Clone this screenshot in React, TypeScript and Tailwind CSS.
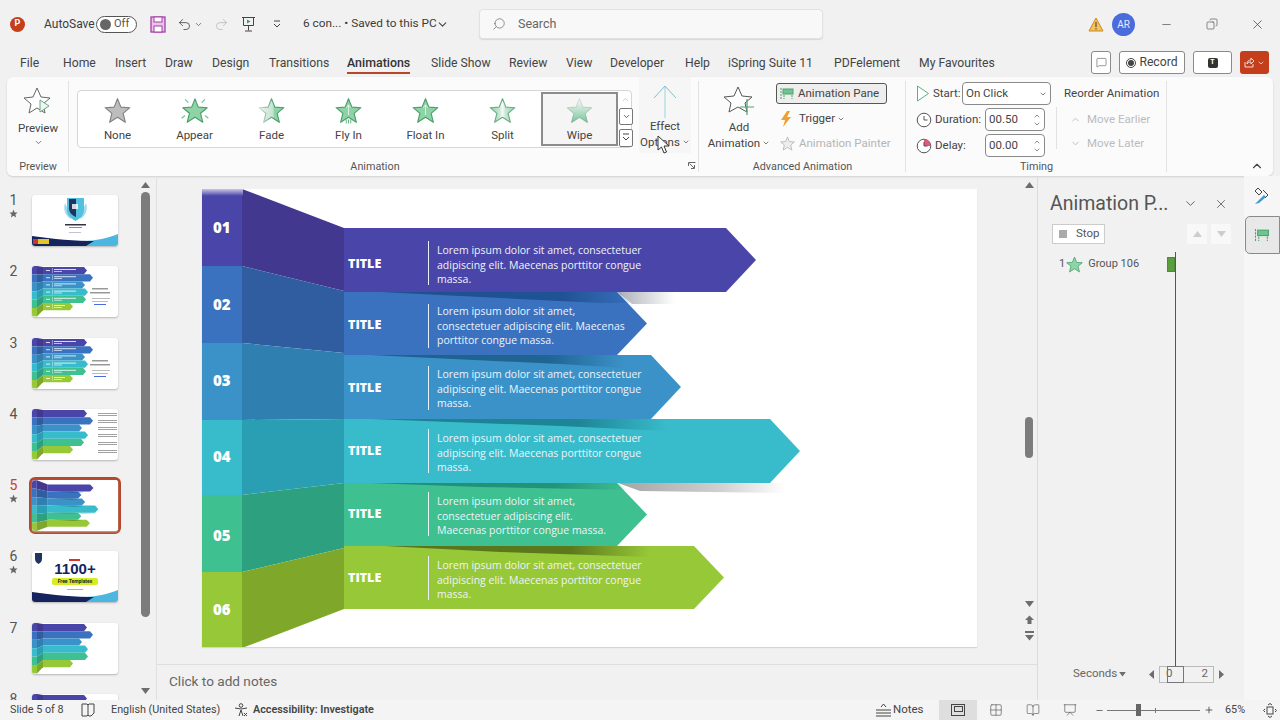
import React from "react";
import { ChevronDown, ChevronUp, Minus, Plus, Search, Undo2, X, MessageSquare, Copy, Grid2x2, BookOpen, Presentation } from "lucide-react";

const STAR = "12,1.500 15,9 23,9.500 17,14.500 19,22.500 12,18 5,22.500 7,14.500 1,9.500 9,9";

function Star({ fill = "#8ed3a6", stroke = "#4a9d6a", size = 27, children }: { fill?: string; stroke?: string; size?: number; children?: React.ReactNode }) {
  return (
    <svg width={size} height={size} viewBox="0 0 24 24" className="shrink-0">
      <polygon points={STAR} fill={fill} stroke={stroke} strokeWidth="1" strokeLinejoin="round" />
      {children}
    </svg>
  );
}

function GalleryStar({ kind }: { kind: string }) {
  if (kind === "None") return <Star fill="#bdbdbd" stroke="#808080" />;
  if (kind === "Appear")
    return (
      <svg width="30" height="27" viewBox="-1.500 0 27 24" className="shrink-0 -mx-[2px]">
        <polygon points={STAR} fill="#8ed3a6" stroke="#4a9d6a" strokeWidth="1" strokeLinejoin="round" />
        <path d="M3 2l3 3M21 2l-3 3M0 19l3-2.500M24 19l-3-2.500" stroke="#6fc48f" strokeWidth="1" />
      </svg>
    );
  if (kind === "Fade")
    return (
      <svg width="27" height="27" viewBox="0 0 24 24">
        <defs>
          <linearGradient id="gFade" x1="0" x2="1" y1="0" y2="0">
            <stop offset="0" stopColor="#eef2ef" />
            <stop offset="0.55" stopColor="#c6e4d2" />
            <stop offset="0.62" stopColor="#8ed3a6" />
          </linearGradient>
          <linearGradient id="gFadeS" x1="0" x2="1" y1="0" y2="0">
            <stop offset="0" stopColor="#d5dcd8" />
            <stop offset="0.6" stopColor="#4a9d6a" />
          </linearGradient>
        </defs>
        <polygon points={STAR} fill="url(#gFade)" stroke="url(#gFadeS)" strokeWidth="1" strokeLinejoin="round" />
      </svg>
    );
  if (kind === "Fly In")
    return (
      <Star>
        <path d="M12 7v9M10 9.500l2-2.500 2 2.500" stroke="#e6f5eb" strokeWidth="0.800" fill="none" />
        <path d="M10 20v3.500M12 20v3.500M14 20v3.500" stroke="#3f9a62" strokeWidth="0.700" />
      </Star>
    );
  if (kind === "Float In")
    return (
      <Star>
        <path d="M12 7v9M10 9.500l2-2.500 2 2.500" stroke="#e6f5eb" strokeWidth="0.800" fill="none" />
      </Star>
    );
  if (kind === "Split")
    return (
      <svg width="27" height="27" viewBox="0 0 24 24">
        <defs>
          <linearGradient id="gSplit" x1="0" x2="1" y1="0" y2="0">
            <stop offset="0" stopColor="#8ed3a6" />
            <stop offset="0.38" stopColor="#c8e8d4" />
            <stop offset="0.5" stopColor="#f6faf7" />
            <stop offset="0.62" stopColor="#c8e8d4" />
            <stop offset="1" stopColor="#8ed3a6" />
          </linearGradient>
        </defs>
        <polygon points={STAR} fill="url(#gSplit)" stroke="#6bab85" strokeWidth="1" strokeLinejoin="round" />
      </svg>
    );
  return (
    <svg width="27" height="27" viewBox="0 0 24 24">
      <defs>
        <linearGradient id="gWipe" x1="0" x2="0" y1="0" y2="1">
          <stop offset="0.1" stopColor="#f2f4f3" />
          <stop offset="0.95" stopColor="#7fcaa0" />
        </linearGradient>
        <linearGradient id="gWipeS" x1="0" x2="0" y1="0" y2="1">
          <stop offset="0.1" stopColor="#d8dcda" />
          <stop offset="0.95" stopColor="#7fb596" />
        </linearGradient>
      </defs>
      <polygon points={STAR} fill="url(#gWipe)" stroke="url(#gWipeS)" strokeWidth="0.900" strokeLinejoin="round" />
    </svg>
  );
}

const tabs = ["File", "Home", "Insert", "Draw", "Design", "Transitions", "Animations", "Slide Show", "Review", "View", "Developer", "Help", "iSpring Suite 11", "PDFelement", "My Favourites"];
const tabWidths = ["w-[43px]", "w-[52px]", "w-[50px]", "w-[47px]", "w-[57px]", "w-[78px]", "w-[84px]", "w-[78px]", "w-[57px]", "w-[44px]", "w-[75px]", "w-[43px]", "w-[106px]", "w-[85px]", "w-[80px]"];
const gallery = ["None", "Appear", "Fade", "Fly In", "Float In", "Split", "Wipe"];

function TitleBar() {
  return (
    <div className="h-[44px] pt-[4px] flex items-center text-[12px] text-[#3c3c3c]">
      <div className="ml-[10px] w-[15px] h-[15px] rounded-full bg-[#c43e1c] text-white text-[9px] font-bold flex items-center justify-center">P</div>
      <span className="ml-[19px] w-[52px]">AutoSave</span>
      <div className="w-[41px] h-[17px] rounded-full border border-[#555] flex items-center pl-[3px] gap-[3px] bg-white">
        <span className="w-[11px] h-[11px] rounded-full bg-[#666]" />
        <span className="text-[11px] text-[#555]">Off</span>
      </div>
      <svg width="16" height="17" viewBox="0 0 16 17" className="ml-[13px]">
        <rect x="1" y="1" width="14" height="15" fill="#e9c3ea" stroke="#a43fa8" strokeWidth="1.300" />
        <rect x="4" y="1" width="8" height="5" fill="#fff" stroke="#a43fa8" />
        <rect x="4" y="10" width="8" height="6" fill="#fff" stroke="#a43fa8" />
      </svg>
      <Undo2 size={15} strokeWidth={1.3} className="ml-[11px] text-[#444]" />
      <ChevronDown size={9} className="ml-[2px] text-[#555]" />
      <Undo2 size={15} strokeWidth={1} className="ml-[11px] text-[#aaa] -scale-x-100" />
      <svg width="15" height="17" viewBox="0 0 15 17" className="ml-[12px]">
        <path d="M1 1.500h13M2.500 1.500v8h10v-8M7.500 9.500v5M4 15h7" stroke="#444" fill="none" />
        <path d="M6 3.500l3.500 2-3.500 2z" fill="#3f9a62" />
      </svg>
      <svg width="8" height="9" viewBox="0 0 8 9" className="ml-[17px]">
        <path d="M1 1h6M1 4l3 3 3-3" stroke="#444" fill="none" />
      </svg>
      <span className="ml-[22px] w-[133px] whitespace-nowrap text-[11.800px]">6 con... • Saved to this PC</span>
      <ChevronDown size={13} className="text-[#444]" />
      <div className="ml-[30px] w-[344px] h-[30px] rounded-[4px] bg-[#f8f8f8] border border-[#e2e2e2] shadow-[0_1px_1px_#d8d8d8] flex items-center pl-[12px] gap-[12px] text-[#666] text-[12.500px]">
        <Search size={14} strokeWidth={1.2} className="-scale-x-100" />
        Search
      </div>
      <svg width="16" height="15" viewBox="0 0 16 15" className="ml-[265px]">
        <path d="M8 1L15 14H1z" fill="#f4c25b" stroke="#c98a20" />
        <path d="M8 5v5M8 11.200v1.300" stroke="#333" />
      </svg>
      <div className="ml-[8px] w-[23px] h-[23px] rounded-full bg-[#4a6cdc] text-[#e6ebff] text-[10px] flex items-center justify-center">AR</div>
      <Minus size={13} strokeWidth={1.2} className="ml-[25px] text-[#444]" />
      <Copy size={12} strokeWidth={1.2} className="ml-[33px] text-[#444] -scale-x-100" />
      <X size={15} strokeWidth={1.2} className="ml-[32px] text-[#444]" />
    </div>
  );
}

function TabBar() {
  return (
    <div className="h-[33px] flex items-start pl-[20px] text-[12.200px] text-[#444]">
      {tabs.map((t, i) => (
        <div key={t} className={`${tabWidths[i]} h-[27px] pt-[10px] whitespace-nowrap`}>
          <span className={t === "Animations" ? "inline-block h-[20px] border-b-2 border-[#b7472a] text-[#333] font-medium text-[12.400px]" : ""}>{t}</span>
        </div>
      ))}
      <div className="ml-[92px] mt-[7px] w-[20px] h-[23px] border border-[#8a8a8a] rounded-[3px] bg-white flex items-center justify-center shrink-0">
        <MessageSquare size={11} strokeWidth={1.2} />
      </div>
      <div className="ml-[8px] mt-[7px] w-[66px] h-[23px] border border-[#8a8a8a] rounded-[3px] bg-white flex items-center justify-center gap-[3px] shrink-0">
        <span className="w-[10px] h-[10px] rounded-full border border-[#444] flex items-center justify-center">
          <span className="w-[6px] h-[6px] rounded-full bg-[#444]" />
        </span>
        Record
      </div>
      <div className="ml-[8px] mt-[7px] w-[39px] h-[23px] border border-[#8a8a8a] rounded-[3px] bg-white flex items-center justify-center shrink-0">
        <span className="w-[10px] h-[10px] rounded-[2px] bg-[#333] text-white text-[7px] font-bold flex items-center justify-center">T</span>
      </div>
      <div className="ml-[8px] mt-[7px] w-[29px] h-[23px] rounded-[3px] bg-[#c43e1c] flex items-center justify-center gap-[2px] text-white shrink-0">
        <svg width="11" height="11" viewBox="0 0 11 11">
          <path d="M1 5v5h8V7M3 7c0-3 2-4 4-4V1l3 3-3 3V5C5 5 4 5.500 3 7z" fill="none" stroke="#fff" strokeWidth="0.800" />
        </svg>
        <ChevronDown size={8} />
      </div>
    </div>
  );
}

function Group({ width, label, labelClass = "", children }: { width: string; label: string; labelClass?: string; children: React.ReactNode }) {
  return (
    <div className={`${width} h-full flex flex-col relative after:absolute after:right-0 after:top-[4px] after:bottom-[4px] after:w-px after:bg-[#e2e2e2]`}>
      <div className="flex-1 min-h-0 flex">{children}</div>
      <div className={`h-[20px] text-[10.800px] text-[#555] flex items-center justify-center pt-[2px] ${labelClass}`}>{label}</div>
    </div>
  );
}

function Spinner({ value }: { value: string }) {
  return (
    <div className="w-[60px] h-[23px] border border-[#8a8a8a] rounded-[4px] bg-white flex items-center justify-between pl-[3px] pr-[3px] text-[11.500px]">
      {value}
      <div className="flex flex-col text-[#555]">
        <ChevronUp size={8} />
        <ChevronDown size={8} />
      </div>
    </div>
  );
}

function Clock({ delay }: { delay?: boolean }) {
  return (
    <svg width="16" height="16" viewBox="0 0 16 16" className="shrink-0">
      <circle cx="8" cy="8" r="6.800" fill="#fff" stroke="#555" />
      {delay && <path d="M8 8V1.200A6.800 6.800 0 0 1 14.800 8z" fill="#e8557a" />}
      <path d="M8 4v4h3.500" stroke="#555" fill="none" />
    </svg>
  );
}

function Ribbon() {
  return (
    <div className="mx-[7px] h-[99px] bg-[#fbfbfb] rounded-[6px] shadow-[0_1px_2px_#cfcfcf] flex text-[11.500px] text-[#444]">
      <Group width="w-[62px]" label="Preview">
        <div className="w-full flex flex-col items-center pt-[9px]">
          <svg width="30" height="30" viewBox="0 0 30 30">
            <polygon points="14,2 18,11 27,12 20,18 22,27 14,22 6,27 8,18 1,12 10,11" fill="#fff" stroke="#666" strokeLinejoin="round" />
            <path d="M17 14l9 6-9 6z" fill="#eef7f1" stroke="#6aa884" />
          </svg>
          <span className="mt-[5px] leading-[14px]">Preview</span>
          <ChevronDown size={9} className="mt-[3px] text-[#555]" />
        </div>
      </Group>
      <Group width="w-[630px]" label="Animation" labelClass="pr-[18px]">
        <div className="ml-[8px] mt-[13px] w-[555px] h-[58px] border border-[#d6d6d6] rounded-[4px] bg-white flex items-center">
          <div className="flex pl-[1px]">
            {gallery.map((g) => (
              <div key={g} className={`w-[77px] h-[54px] flex flex-col items-center pt-[3px] border-2 ${g === "Wipe" ? "border-[#8c8c8c] bg-[#f5f5f5]" : "border-transparent"}`}>
                <GalleryStar kind={g} />
                <span className="mt-[4px] leading-[14px] text-[11.500px]">{g}</span>
              </div>
            ))}
          </div>
          <div className="flex flex-col gap-[1px] ml-[1px] text-[#333]">
            <div className="w-[13px] h-[15px] flex items-center justify-center text-[#bbb]"><ChevronUp size={9} /></div>
            <div className="w-[14px] h-[17px] border border-[#777] rounded-[2px] bg-white flex items-center justify-center"><ChevronDown size={9} /></div>
            <div className="mt-[3px] w-[14px] h-[18px] border border-[#777] rounded-[2px] bg-white flex items-center justify-center">
              <svg width="8" height="9" viewBox="0 0 8 9"><path d="M1 1h6M1 4l3 3 3-3" stroke="#444" fill="none" /></svg>
            </div>
          </div>
        </div>
        <div className="ml-[7px] w-[52px] h-[76px] flex flex-col items-center bg-[#f6f6f6] pt-[8px] relative">
          <svg width="26" height="33" viewBox="0 0 26 33">
            <path d="M13 1v32" stroke="#9fd2dc" />
            <path d="M2 13L13 1l11 12" stroke="#7cc0cf" fill="none" />
          </svg>
          <span className="leading-[16px]">Effect</span>
          <span className="leading-[16px] flex items-center gap-[2px] whitespace-nowrap">Options<ChevronDown size={8} /></span>
          <svg width="13" height="19" viewBox="0 0 13 19" className="absolute left-[18px] top-[58px]">
            <path d="M1 1v14l3.500-3 2.500 6 2.500-1-2.500-6h5z" fill="#fff" stroke="#333" strokeWidth="1" strokeLinejoin="round" />
          </svg>
        </div>
        <svg width="8" height="8" viewBox="0 0 8 8" className="absolute right-[3px] bottom-[6px]">
          <path d="M.5 4V.5H7.500M1.500 1.500L6 6M3 6.500h3.500V3" fill="none" stroke="#666" />
        </svg>
      </Group>
      <Group width="w-[207px]" label="Advanced Animation">
        <div className="w-[74px] flex flex-col items-center pt-[8px] ml-[3px]">
          <svg width="32" height="32" viewBox="0 0 32 32">
            <polygon points="15,2 19,11 29,12 22,18 24,27 15,22 6,27 8,18 1,12 11,11" fill="#fff" stroke="#555" strokeLinejoin="round" />
            <path d="M24 14v16M17 22h14" stroke="#4aa56f" strokeWidth="1.200" />
          </svg>
          <span className="leading-[16px] mt-[2px]">Add</span>
          <span className="leading-[16px] flex items-center gap-[2px] whitespace-nowrap">Animation<ChevronDown size={8} /></span>
        </div>
        <div className="flex flex-col pt-[6px]">
          <div className="w-[111px] h-[22px] border border-[#555] rounded-[3px] bg-[#eeeeee] flex items-center px-[3px] gap-[3px] whitespace-nowrap">
            <svg width="15" height="13" viewBox="0 0 15 13">
              <rect x="3" y="2" width="10" height="5" fill="#6fc48f" stroke="#4aa56f" />
              <path d="M1 1v11M4 8v4M12 8v4" stroke="#4aa56f" strokeDasharray="2 1" />
            </svg>
            Animation Pane
          </div>
          <div className="h-[26px] mt-[3px] flex items-center pl-[4px] gap-[6px]">
            <svg width="13" height="16" viewBox="0 0 13 16"><path d="M7 0L1 9h4l-2 7 8-10H7l3-6z" fill="#f0a030" /></svg>
            <span className="flex items-center gap-[2px]">Trigger<ChevronDown size={8} /></span>
          </div>
          <div className="h-[26px] mt-[1px] flex items-center pl-[4px] gap-[4px] text-[#b5b5b5] whitespace-nowrap">
            <svg width="15" height="15" viewBox="0 0 24 24"><polygon points={STAR} fill="#eee" stroke="#bbb" strokeWidth="1.500" /></svg>
            Animation Painter
          </div>
        </div>
      </Group>
      <Group width="w-[261px]" label="Timing">
        <div className="w-[150px] flex flex-col pl-[10px] pt-[5px]">
          <div className="h-[24px] flex items-center">
            <svg width="14" height="17" viewBox="0 0 14 17"><path d="M1.500 1l11 7.500-11 7.500z" fill="#fff" stroke="#5fae80" /></svg>
            <span className="ml-[3px] w-[29px]">Start:</span>
            <div className="w-[89px] h-[23px] border border-[#8a8a8a] rounded-[4px] bg-white flex items-center justify-between px-[3px] shrink-0">
              On Click<ChevronDown size={8} />
            </div>
          </div>
          <div className="h-[23px] mt-[3px] flex items-center">
            <Clock />
            <span className="ml-[3px] w-[50px]">Duration:</span>
            <Spinner value="00.50" />
          </div>
          <div className="h-[23px] mt-[3px] flex items-center">
            <Clock delay />
            <span className="ml-[3px] w-[50px]">Delay:</span>
            <Spinner value="00.00" />
          </div>
        </div>
        <div className="flex flex-col pl-[8px] whitespace-nowrap pt-[5px] relative">
          <div className="h-[24px] flex items-center">Reorder Animation</div>
          <div className="h-[26px] mt-[3px] flex items-center gap-[6px] pl-[6px] text-[#bbb]"><ChevronUp size={11} />Move Earlier</div>
          <div className="h-[26px] flex items-center gap-[6px] pl-[6px] text-[#bbb]"><ChevronDown size={11} />Move Later</div>
          <div className="absolute left-0 top-[30px] h-[42px] w-px bg-[#e2e2e2]" />
        </div>
      </Group>
      <div className="flex-1 flex justify-end items-end pr-[9px] pb-[3px]">
        <ChevronUp size={14} className="text-[#444]" />
      </div>
    </div>
  );
}

type Band = { col: string; wall: string; left: [number, number]; right: [number, number]; end: number; top: number; bottom: number };
const bands: Band[] = [
  { col: "#4a45a8", wall: "#43388f", left: [189, 266], right: [228, 291], end: 756, top: 228, bottom: 292 },
  { col: "#3a72c0", wall: "#2f5da0", left: [266, 343], right: [291, 353], end: 647, top: 292, bottom: 355 },
  { col: "#3b92c9", wall: "#2f80b0", left: [343, 420], right: [353, 419], end: 681, top: 355, bottom: 419 },
  { col: "#38bccb", wall: "#2a9fb3", left: [420, 495], right: [419, 483], end: 800, top: 419, bottom: 483 },
  { col: "#3ec090", wall: "#2da17f", left: [495, 572], right: [483, 548], end: 647, top: 483, bottom: 546 },
  { col: "#97c838", wall: "#7fa82a", left: [572, 648], right: [548, 609], end: 724, top: 546, bottom: 609 },
];

const shadows: [string, string, number, number, string][] = [
  ["sh1", "#1d4f8f", 380, 640, "380,292 620,292 630,303 600,303"],
  ["sh2", "#1d5f8c", 370, 625, "370,355 625,355 625,368 560,364"],
  ["sh3", "#1b7f90", 370, 668, "370,419 668,419 668,431 560,426"],
  ["sh4", "#1f8d76", 370, 630, "370,483 618,483 628,490 480,487"],
  ["sh5", "#55701a", 385, 650, "385,546 650,546 650,557 500,552"],
];

function SlideArt({ className }: { className?: string }) {
  return (
    <svg viewBox="202 189 775 458" className={className}>
      <defs>
        {shadows.map(([id, c, x1, x2]) => (
          <linearGradient key={id} id={id} gradientUnits="userSpaceOnUse" x1={x1} x2={x2} y1="0" y2="0">
            <stop offset="0" stopColor={c} stopOpacity="0.95" />
            <stop offset="0.7" stopColor={c} stopOpacity="0.9" />
            <stop offset="1" stopColor={c} stopOpacity="0" />
          </linearGradient>
        ))}
        <linearGradient id="gr1" gradientUnits="userSpaceOnUse" x1="620" x2="675" y1="0" y2="0">
          <stop offset="0" stopColor="#aeb3ba" />
          <stop offset="1" stopColor="#ffffff" />
        </linearGradient>
        <linearGradient id="gr2" gradientUnits="userSpaceOnUse" x1="620" x2="785" y1="0" y2="0">
          <stop offset="0" stopColor="#a5a5a5" />
          <stop offset="0.6" stopColor="#cfcfcf" />
          <stop offset="1" stopColor="#ffffff" />
        </linearGradient>
        <linearGradient id="topFade" x1="0" x2="0" y1="0" y2="1">
          <stop offset="0" stopColor="#c9c6e6" />
          <stop offset="1" stopColor="#4a45a8" />
        </linearGradient>
      </defs>
      <rect x="202" y="189" width="775" height="458" fill="#ffffff" />
      <polygon points="618,292 675,292 675,304 632,304" fill="url(#gr1)" />
      <polygon points="618,483 785,483 785,493 640,491" fill="url(#gr2)" />
      {bands.map((b, i) => (
        <g key={i}>
          <rect x="202" y={b.left[0]} width="41" height={b.left[1] - b.left[0]} fill={b.col} />
          <polygon points={`242,${b.left[0]} 344,${b.right[0]} 344,${b.right[1]} 242,${b.left[1]}`} fill={b.wall} />
          <polygon points={`344,${b.top} ${b.end - 30},${b.top} ${b.end},${(b.top + b.bottom) / 2} ${b.end - 30},${b.bottom} 344,${b.bottom}`} fill={b.col} />
        </g>
      ))}
      <rect x="202" y="189" width="41" height="7" fill="url(#topFade)" />
      {shadows.map(([id, , , , pts]) => (
        <polygon key={id} points={pts} fill={`url(#${id})`} />
      ))}
    </svg>
  );
}

function Bars({ ends, lines, children }: { ends: number[]; lines?: boolean; children?: React.ReactNode }) {
  return (
    <svg viewBox="0 0 86 51" className="w-full h-full block">
      {bands.map((b, i) => {
        const y = 1 + i * 7.200;
        return (
          <g key={i}>
            <rect x="0" y={i * 8.400} width="5" height="8.400" fill={b.col} />
            <polygon points={`5,${i * 8.400} 11,${y} 11,${y + 7.200} 5,${i * 8.400 + 8.400}`} fill={b.wall} />
            <polygon points={`11,${y} ${ends[i] - 3},${y} ${ends[i]},${y + 3.600} ${ends[i] - 3},${y + 7.200} 11,${y + 7.200}`} fill={b.col} />
            {lines && (
              <g fill="#fff" opacity="0.8">
                <rect x="14" y={y + 3} width="4" height="1" />
                <rect x="20" y={y + 1} width="0.500" height="5" />
                <rect x="22" y={y + 2} width={Math.min(22, ends[i] - 30)} height="1" />
                <rect x="22" y={y + 4} width="8" height="0.800" />
              </g>
            )}
          </g>
        );
      })}
      {children}
    </svg>
  );
}

const tocLines = (
  <g>
    <rect x="60" y="22" width="16" height="1.500" fill="#999" />
    <rect x="58" y="26" width="20" height="1.500" fill="#999" />
    <rect x="60" y="32" width="18" height="1" fill="#bbb" />
    <rect x="60" y="35" width="16" height="1" fill="#bbb" />
    <rect x="62" y="38" width="12" height="1" fill="#4a6cdc" />
  </g>
);
const sideLines = (
  <g fill="#8a8a8a">
    {[4, 11, 18, 25, 33, 41].map((y) => (
      <g key={y}>
        <rect x="66" y={y} width="19" height="0.800" />
        <rect x="66" y={y + 2} width="19" height="0.800" />
      </g>
    ))}
  </g>
);

function Wave() {
  return (
    <svg viewBox="0 0 86 51" className="absolute inset-0 w-full h-full" preserveAspectRatio="none">
      <path d="M50 46c14 0 26-3 36-7v12H46z" fill="#4cb5e0" />
      <path d="M0 41c20 3 45 5 62 5l-8 5H0z" fill="#16235c" />
    </svg>
  );
}

function Thumb({ n }: { n: number }) {
  const base = "w-[86px] h-[51px] bg-white shadow-[0_1px_2px_#b5b5b5] rounded-[3px] relative overflow-hidden";
  if (n === 1)
    return (
      <div className={base}>
        <Wave />
        <svg viewBox="0 0 86 51" className="absolute inset-0 w-full h-full">
          <path d="M33 8c-2 6 0 13 6 16l-2-8zM54 8c2 6 0 13-6 16l2-8z" fill="#9fdcec" />
          <path d="M35 3h17v12c0 6-5 9-8.500 11C40 24 35 21 35 15z" fill="#54c0e0" />
          <path d="M37 4h7v18c-5-2-7-5-7-9z" fill="#1d3560" />
          <rect x="40" y="9" width="6" height="5" fill="#fff" opacity="0.8" />
          <rect x="33" y="29" width="21" height="1.500" fill="#334" />
          <rect x="37" y="32" width="13" height="1" fill="#889" />
          <rect x="37" y="37" width="12" height="0.700" fill="#aab" />
          <rect x="1" y="44" width="16" height="5" fill="#e3c52a" />
          <rect x="1" y="44" width="5" height="5" fill="#c8372d" />
        </svg>
      </div>
    );
  if (n === 2 || n === 3)
    return (
      <div className={`${base} bg-[#f7f7f7]`}>
        <Bars ends={[55, 61, 53, 56, 54, 41]} lines>{tocLines}</Bars>
      </div>
    );
  if (n === 4)
    return (
      <div className={base}>
        <Bars ends={[55, 61, 50, 56, 52, 41]}>{sideLines}</Bars>
      </div>
    );
  if (n === 5)
    return (
      <div className={base}>
        <SlideArt className="w-full h-full block" />
      </div>
    );
  if (n === 6)
    return (
      <div className={base}>
        <Wave />
        <svg viewBox="0 0 86 51" className="absolute inset-0 w-full h-full">
          <path d="M3 2h7v6c0 2-1.500 4-3.500 5-2-1-3.500-3-3.500-5z" fill="#1d3560" />
          <rect x="37" y="8" width="11" height="2" fill="#d8342b" />
          <rect x="35" y="38" width="16" height="1" fill="#b9a9b0" />
        </svg>
        <div className="absolute left-0 right-0 top-[10px] text-center text-[15px] leading-[15px] font-bold text-[#14235f] whitespace-nowrap font-['Liberation_Sans',sans-serif]">1100+</div>
        <div className="absolute left-[20px] top-[27px] w-[46px] h-[7px] rounded-[2px] bg-[#d6ee20] text-[5px] leading-[7px] font-bold text-center text-[#223] whitespace-nowrap">Free Templates</div>
      </div>
    );
  return (
    <div className={base}>
      <Bars ends={[55, 61, 50, 56, 56, 41]} />
    </div>
  );
}

function Tri({ dir = "up", className = "" }: { dir?: "up" | "down" | "left" | "right"; className?: string }) {
  const p = { up: "M0 7L4.500 1 9 7z", down: "M0 1h9L4.500 7z", left: "M6 0v9L1 4.500z", right: "M1 0v9l5-4.500z" }[dir];
  return (
    <svg width="9" height="9" viewBox="0 0 9 9" className={className}>
      <path d={p} fill="#6d6d6d" />
    </svg>
  );
}

function LeftPanel() {
  const starred = [1, 5, 6];
  return (
    <div className="w-[157px] h-full flex border-r border-[#e0e0e0]">
      <div className="w-[136px] h-full overflow-hidden pt-[19px]">
        {[1, 2, 3, 4, 5, 6, 7, 8].map((n) => (
          <div key={n} className="h-[71.300px] flex items-start">
            <div className="w-[32px] flex flex-col items-center pr-[5px] -mt-[4px]">
              <span className={`text-[14px] leading-[18px] ${n === 5 ? "text-[#c8402a]" : "text-[#555]"}`}>{n}</span>
              {starred.includes(n) && <svg width="9" height="9" viewBox="0 0 24 24"><polygon points={STAR} fill="#666" /></svg>}
            </div>
            <div className={n === 5 ? "-m-[3px] border-[3px] border-[#b7472a] rounded-[6px]" : ""}>
              <Thumb n={n} />
            </div>
          </div>
        ))}
      </div>
      <div className="w-[20px] h-full flex flex-col items-center pt-[5px] pr-[1px]">
        <Tri />
        <div className="w-[9px] h-[425px] bg-[#7c7c7c] rounded-full mt-[2px]" />
        <Tri dir="down" className="mt-[70px]" />
      </div>
    </div>
  );
}

const rows = [
  { num: "01", numTop: "top-[28px]", titleTop: "top-[65px]", bodyTop: "top-[54px]", lineTop: "top-[52px]", lines: ["Lorem ipsum dolor sit amet, consectetuer", "adipiscing elit. Maecenas porttitor congue", "massa."] },
  { num: "02", numTop: "top-[105px]", titleTop: "top-[126px]", bodyTop: "top-[115px]", lineTop: "top-[115px]", lines: ["Lorem ipsum dolor sit amet,", "consectetuer adipiscing elit. Maecenas", "porttitor congue massa."] },
  { num: "03", numTop: "top-[181px]", titleTop: "top-[189px]", bodyTop: "top-[178px]", lineTop: "top-[177px]", lines: ["Lorem ipsum dolor sit amet, consectetuer", "adipiscing elit. Maecenas porttitor congue", "massa."] },
  { num: "04", numTop: "top-[257px]", titleTop: "top-[252px]", bodyTop: "top-[242px]", lineTop: "top-[240px]", lines: ["Lorem ipsum dolor sit amet, consectetuer", "adipiscing elit. Maecenas porttitor congue", "massa."] },
  { num: "05", numTop: "top-[336px]", titleTop: "top-[315px]", bodyTop: "top-[305px]", lineTop: "top-[303px]", lines: ["Lorem ipsum dolor sit amet,", "consectetuer adipiscing elit.", "Maecenas porttitor congue massa."] },
  { num: "06", numTop: "top-[410px]", titleTop: "top-[379px]", bodyTop: "top-[369px]", lineTop: "top-[367px]", lines: ["Lorem ipsum dolor sit amet, consectetuer", "adipiscing elit. Maecenas porttitor congue", "massa."] },
];

function Slide() {
  return (
    <div className="w-[775px] h-[458px] relative shadow-[0_1px_1px_#d5d5d5] font-['Open_Sans',sans-serif] text-white">
      <SlideArt className="w-full h-full block" />
      {rows.map((r) => (
        <React.Fragment key={r.num}>
          <div className={`absolute left-[11px] ${r.numTop} text-[15px] leading-[20px] font-extrabold`}>{r.num}</div>
          <div className={`absolute left-[146px] ${r.titleTop} text-[12.500px] leading-[20px] font-extrabold`}>TITLE</div>
          <div className={`absolute left-[226px] ${r.lineTop} w-px h-[44px] bg-[#e8f0f8]`} />
          <div className={`absolute left-[235px] ${r.bodyTop} text-[10.500px] leading-[14.500px] whitespace-nowrap text-[#eef3fa]`}>
            {r.lines.map((l) => (
              <div key={l}>{l}</div>
            ))}
          </div>
        </React.Fragment>
      ))}
    </div>
  );
}

function Center() {
  return (
    <div className="flex-1 h-full flex flex-col min-w-0">
      <div className="h-[489px] flex border-b border-[#dedede]">
        <div className="w-[866px] pl-[45px] pt-[13px]">
          <Slide />
        </div>
        <div className="flex-1 flex flex-col items-center pt-[5px] pr-[2px]">
          <Tri />
          <div className="w-[8px] h-[41px] mt-[227px] bg-[#7c7c7c] rounded-full" />
          <Tri dir="down" className="mt-[142px]" />
          <svg width="9" height="10" viewBox="0 0 9 10" className="mt-[6px]"><path d="M0 5l4.500-4.500L9 5H6.500v4h-4V5z" fill="#6d6d6d" /></svg>
          <svg width="9" height="10" viewBox="0 0 9 10" className="mt-[6px]"><path d="M0 0h9v2H0zM0 4h9L4.500 9.500z" fill="#6d6d6d" /></svg>
        </div>
      </div>
      <div className="flex-1 pl-[12px] pb-[2px] flex items-center text-[13.600px] text-[#666]">Click to add notes</div>
    </div>
  );
}

function AnimationPane() {
  return (
    <div className="w-[207px] h-full border-l border-[#dcdcdc] relative text-[#555]">
      <div className="h-[48px] flex items-center pl-[12px] pt-[7px]">
        <span className="text-[19.500px] w-[131px] whitespace-nowrap">Animation P...</span>
        <ChevronDown size={15} strokeWidth={1.4} className="ml-[2px]" />
        <X size={14} strokeWidth={1.4} className="ml-[16px]" />
      </div>
      <div className="flex items-start pl-[14px]">
        <div className="w-[53px] h-[20px] bg-white border border-[#ccc] flex items-center pl-[6px] gap-[9px] text-[11.500px]">
          <span className="w-[8px] h-[8px] bg-[#aaa]" />
          Stop
        </div>
        <div className="ml-[82px] w-[20px] h-[20px] bg-[#f8f8f8] flex items-center justify-center"><Tri className="opacity-30" /></div>
        <div className="ml-[4px] w-[20px] h-[20px] bg-[#f8f8f8] flex items-center justify-center"><Tri dir="down" className="opacity-30" /></div>
      </div>
      <div className="mt-[11px] flex items-center pl-[21px] text-[11px] h-[18px]">
        <span>1</span>
        <svg width="17" height="17" viewBox="0 0 24 24" className="ml-[1px]"><polygon points={STAR} fill="#8fd4a8" stroke="#4aa56f" strokeWidth="1.200" /></svg>
        <span className="ml-[5px] w-[79px] whitespace-nowrap">Group 106</span>
        <span className="w-[8px] h-[15px] bg-[#5a9e3e] border border-[#4f8a37]" />
      </div>
      <div className="absolute left-[137px] top-[76px] bottom-[34px] w-px bg-[#555]" />
      <div className="absolute left-0 right-0 bottom-[16px] h-[20px] flex items-center pl-[35px] text-[11.500px] text-[#666]">
        <span className="whitespace-nowrap w-[44px]">Seconds</span>
        <Tri dir="down" className="ml-[1px] scale-75" />
        <Tri dir="left" className="ml-[21px]" />
        <div className="ml-[2px] w-[55px] h-[17px] border border-[#bbb] flex items-center justify-between pl-[6px] pr-[5px] relative">
          <span>0</span>
          <span>2</span>
          <div className="absolute left-[7px] top-[-1px] w-[17px] h-[17px] border border-[#777]" />
        </div>
        <Tri dir="right" className="ml-[4px]" />
      </div>
    </div>
  );
}

function RightStrip() {
  return (
    <div className="flex-1 h-full bg-[#f6f6f6] flex flex-col items-end">
      <div className="w-full flex justify-center pt-[11px] h-[40px]">
        <svg width="18" height="18" viewBox="0 0 18 18">
          <path d="M5 1l4 4-3 3-4-4z" fill="none" stroke="#444" />
          <path d="M10 3l5 5-3 3" fill="none" stroke="#444" />
          <path d="M4 15l7-7 2 2-7 6-4 1z" fill="#3d9bd0" />
        </svg>
      </div>
      <div className="w-[35px] h-[38px] border border-[#8a8a8a] rounded-l-[5px] bg-[#e8e8e8] flex items-center justify-center">
        <svg width="17" height="14" viewBox="0 0 15 13">
          <rect x="3" y="2" width="10" height="5" fill="#6fc48f" stroke="#4aa56f" />
          <path d="M1 1v11M4 8v4M12 8v4" stroke="#4aa56f" strokeDasharray="2 1" />
        </svg>
      </div>
    </div>
  );
}

function StatusBar() {
  return (
    <div className="h-[20px] bg-[#f4f4f4] flex items-center text-[10.800px] text-[#444]">
      <span className="ml-[10px] w-[71px] whitespace-nowrap">Slide 5 of 8</span>
      <svg width="14" height="14" viewBox="0 0 14 14"><path d="M1 1h5l1 1 1-1h5v9l-3 3H8L7 12 6 13H1zM7 2v10" fill="none" stroke="#444" /></svg>
      <span className="ml-[16px] w-[123px] whitespace-nowrap">English (United States)</span>
      <svg width="14" height="14" viewBox="0 0 14 14"><circle cx="7" cy="2.500" r="1.800" fill="none" stroke="#444" /><path d="M1 5l6 1 6-1M5 13l2-6 2 6M10 10l3 3m0-3l-3 3" fill="none" stroke="#444" /></svg>
      <span className="ml-[5px] w-[118px] font-semibold whitespace-nowrap">Accessibility: Investigate</span>
      <div className="ml-[505px] flex items-center gap-[2px] w-[63px] text-[11.500px]">
        <svg width="15" height="14" viewBox="0 0 15 14"><path d="M0 7h15M0 10h15M0 13h15M5 4l2.500-3L10 4" fill="none" stroke="#444" /></svg>
        Notes
      </div>
      <div className="w-[38px] h-[20px] bg-[#dedede] flex items-center justify-center">
        <svg width="14" height="12" viewBox="0 0 14 12"><rect x="0.500" y="0.500" width="13" height="11" fill="none" stroke="#444" /><rect x="3.500" y="2.500" width="8" height="5" fill="none" stroke="#444" /></svg>
      </div>
      <Grid2x2 size={14} strokeWidth={1} className="ml-[12px]" />
      <BookOpen size={14} strokeWidth={1} className="ml-[23px]" />
      <Presentation size={14} strokeWidth={1} className="ml-[23px]" />
      <Minus size={9} className="ml-[18px]" />
      <div className="ml-[3px] w-[93px] h-[1px] bg-[#777] relative shrink-0">
        <div className="absolute left-[29px] -top-[6px] w-[5px] h-[12px] bg-[#666]" />
        <div className="absolute left-[48px] -top-[2px] w-px h-[5px] bg-[#777]" />
      </div>
      <Plus size={10} className="ml-[4px]" />
      <span className="ml-[11px] w-[36px] whitespace-nowrap">65%</span>
      <svg width="14" height="15" viewBox="0 0 14 15" className="ml-[2px]"><rect x="4" y="4" width="6" height="7" fill="none" stroke="#444" /><path d="M5 2l2-1.500L9 2M5 13l2 1.500L9 13M2 6L.5 7.500 2 9M12 6l1.500 1.500L12 9" fill="none" stroke="#444" /></svg>
    </div>
  );
}

export default function App() {
  return (
    <div className="w-[1280px] h-[720px] overflow-hidden bg-[#f1f1f1] flex flex-col font-['Roboto',sans-serif]">
      <TitleBar />
      <TabBar />
      <Ribbon />
      <div className="h-[524px] flex">
        <LeftPanel />
        <div className="w-[880px] h-full flex"><Center /></div>
        <AnimationPane />
        <RightStrip />
      </div>
      <StatusBar />
    </div>
  );
}
